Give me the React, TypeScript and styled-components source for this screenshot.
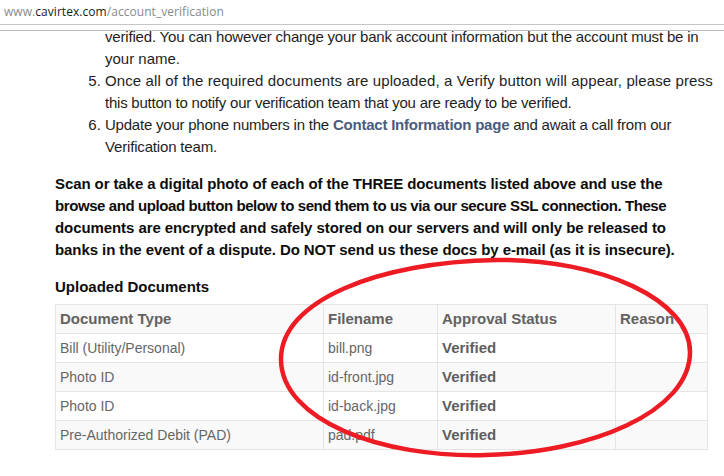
import React from "react";
import styled, { createGlobalStyle } from "styled-components";

const Global = createGlobalStyle`
  html, body { margin: 0; padding: 0; background: #fff; }
  body { width: 724px; height: 476px; overflow: hidden; font-family: "Liberation Sans", Arial, sans-serif; }
`;

const Page = styled.div`
  position: relative;
  width: 724px;
  height: 476px;
  overflow: hidden;
  background: #fff;
`;

const AddressBar = styled.div`
  height: 25px;
  box-sizing: border-box;
  border-bottom: 1px solid #c6c6c6;
  padding: 2px 0 0 4px;
  font-family: "Open Sans", "Noto Sans", sans-serif;
  font-size: 12px;
  letter-spacing: 0.05px;
  line-height: 20px;
  color: #8a8a8a;
  white-space: nowrap;
`;

const Host = styled.span`
  color: #1a1a1a;
`;

const Viewport = styled.div`
  margin-top: 5px;
  border-top: 1px solid #bdbdbd;
  height: 444px;
  overflow: hidden;
`;

const Content = styled.div`
  margin: -27px 17px 0 55px;
  color: #1e1e1e;
  font-size: 15px;
  line-height: 22px;
`;

const Steps = styled.ol`
  margin: 0;
  padding-left: 50px;
`;

const Step = styled.li``;

const Line = styled.span<{ $ls?: number }>`
  display: block;
  white-space: nowrap;
  letter-spacing: ${(p) => p.$ls ?? 0}px;
`;

const Link = styled.a`
  color: #4a5b7d;
  font-weight: bold;
  text-decoration: none;
`;

const Notice = styled.p`
  margin: 15px 0 0 0;
  font-weight: bold;
  color: #0d0d0d;
`;

const Heading = styled.h4`
  margin: 15px 0 6px 0;
  font-size: 15px;
  line-height: 22px;
  font-weight: bold;
  color: #0d0d0d;
`;

const Table = styled.table`
  border-collapse: collapse;
  width: 652px;
  font-size: 14px;
  color: #666;
  table-layout: fixed;
`;

const Row = styled.tr<{ $shade: boolean }>`
  background: ${(p) => (p.$shade ? "#f9f9f9" : "#fff")};
`;

const Th = styled.th<{ $w: number }>`
  width: ${(p) => p.$w}px;
  height: 29px;
  padding: 0 4px;
  border: 1px solid #e4e4e4;
  text-align: left;
  font-size: 15px;
  font-weight: bold;
  color: #626262;
  box-sizing: border-box;
  white-space: nowrap;
`;

const Td = styled.td<{ $bold?: boolean }>`
  height: 29px;
  padding: 0 4px;
  border: 1px solid #e4e4e4;
  font-size: ${(p) => (p.$bold ? "15px" : "14px")};
  font-weight: ${(p) => (p.$bold ? "bold" : "normal")};
  color: ${(p) => (p.$bold ? "#5e5e5e" : "#666")};
  box-sizing: border-box;
  white-space: nowrap;
`;

const Overlay = styled.svg`
  position: absolute;
  left: 0;
  top: 0;
  pointer-events: none;
`;

const docs = [
  { type: "Bill (Utility/Personal)", file: "bill.png" },
  { type: "Photo ID", file: "id-front.jpg" },
  { type: "Photo ID", file: "id-back.jpg" },
  { type: "Pre-Authorized Debit (PAD)", file: "pad.pdf" },
];

export default function App() {
  return (
    <Page>
      <Global />
      <AddressBar>
        www.<Host>cavirtex.com</Host>/account_verification
      </AddressBar>
      <Viewport>
        <Content>
          <Steps start={4}>
            <Step>
              <Line>Your bank account details will be locked once your account is</Line>
              <Line $ls={-0.18}>verified. You can however change your bank account information but the account must be in</Line>
              <Line>your name.</Line>
            </Step>
            <Step>
              <Line $ls={0.11}>Once all of the required documents are uploaded, a Verify button will appear, please press</Line>
              <Line $ls={-0.23}>this button to notify our verification team that you are ready to be verified.</Line>
            </Step>
            <Step>
              <Line $ls={-0.22}>
                Update your phone numbers in the <Link href="#">Contact Information page</Link> and await a call from our
              </Line>
              <Line $ls={-0.17}>Verification team.</Line>
            </Step>
          </Steps>
          <Notice>
            <Line $ls={-0.09}>Scan or take a digital photo of each of the THREE documents listed above and use the</Line>
            <Line $ls={-0.41}>browse and upload button below to send them to us via our secure SSL connection. These</Line>
            <Line $ls={-0.08}>documents are encrypted and safely stored on our servers and will only be released to</Line>
            <Line $ls={-0.08}>banks in the event of a dispute. Do NOT send us these docs by e-mail (as it is insecure).</Line>
          </Notice>
          <Heading>Uploaded Documents</Heading>
          <Table>
            <thead>
              <Row $shade>
                <Th $w={268}>Document Type</Th>
                <Th $w={114}>Filename</Th>
                <Th $w={178}>Approval Status</Th>
                <Th $w={92}>Reason</Th>
              </Row>
            </thead>
            <tbody>
              {docs.map((d, i) => (
                <Row key={i} $shade={i % 2 === 1}>
                  <Td>{d.type}</Td>
                  <Td>{d.file}</Td>
                  <Td $bold>Verified</Td>
                  <Td />
                </Row>
              ))}
            </tbody>
          </Table>
        </Content>
      </Viewport>
      <Overlay width="724" height="476" viewBox="0 0 724 476">
        <path
          d="M 496 260 C 602 259, 690 300, 690 352 C 690 412, 590 453, 486 455 C 380 458, 282 420, 281 360 C 280 300, 380 262, 496 260 Z"
          fill="none"
          stroke="#ed1c24"
          strokeWidth="4.5"
        />
      </Overlay>
    </Page>
  );
}
